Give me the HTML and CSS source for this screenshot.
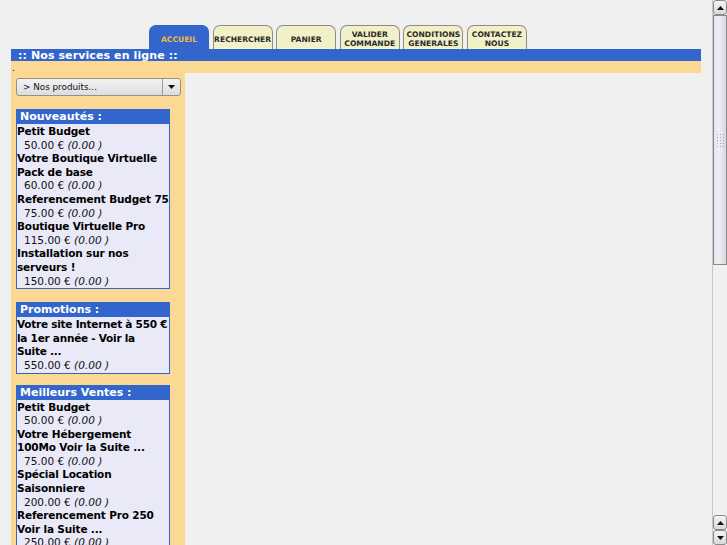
FILE: index.html
```html
<!DOCTYPE html>
<html lang="fr">
<head>
<meta charset="utf-8">
<title>Nos services en ligne</title>
<link rel="stylesheet" href="styles.css">
</head>
<body>
<div class="viewport">
  <div class="page">
    <div class="tabs">
      <div class="tab active">ACCUEIL</div>
      <div class="tab">RECHERCHER</div>
      <div class="tab">PANIER</div>
      <div class="tab">VALIDER<br>COMMANDE</div>
      <div class="tab">CONDITIONS<br>GENERALES</div>
      <div class="tab">CONTACTEZ<br>NOUS</div>
    </div>
    <div class="titlebar">:: Nos services en ligne ::</div>
    <div class="strip">.</div>
    <div class="main">
      <div class="left">
        <div class="select">
          <span class="select-text">&gt; Nos produits...</span>
          <span class="select-btn"><svg width="7" height="4" viewBox="0 0 7 4"><path d="M0 0H7L3.5 4Z" fill="#111"/></svg></span>
        </div>
        <div class="box">
          <div class="box-head">Nouveautés :</div>
          <div class="box-body">
            <div class="name">Petit Budget</div>
            <div class="price">50.00 € <i>(0.00 )</i></div>
            <div class="name">Votre Boutique Virtuelle Pack de base</div>
            <div class="price">60.00 € <i>(0.00 )</i></div>
            <div class="name">Referencement Budget 75</div>
            <div class="price">75.00 € <i>(0.00 )</i></div>
            <div class="name">Boutique Virtuelle Pro</div>
            <div class="price">115.00 € <i>(0.00 )</i></div>
            <div class="name">Installation sur nos serveurs !</div>
            <div class="price">150.00 € <i>(0.00 )</i></div>
          </div>
        </div>
        <div class="box box-promo">
          <div class="box-head">Promotions :</div>
          <div class="box-body">
            <div class="name tight">Votre site Internet à 550&nbsp;€ la 1er année - Voir la Suite&nbsp;...</div>
            <div class="price">550.00 € <i>(0.00 )</i></div>
          </div>
        </div>
        <div class="box">
          <div class="box-head">Meilleurs Ventes :</div>
          <div class="box-body">
            <div class="name">Petit Budget</div>
            <div class="price">50.00 € <i>(0.00 )</i></div>
            <div class="name">Votre Hébergement 100Mo Voir la Suite ...</div>
            <div class="price">75.00 € <i>(0.00 )</i></div>
            <div class="name">Spécial Location Saisonniere</div>
            <div class="price">200.00 € <i>(0.00 )</i></div>
            <div class="name">Referencement Pro 250 Voir la Suite ...</div>
            <div class="price">250.00 € <i>(0.00 )</i></div>
          </div>
        </div>
      </div>
      <div class="content"></div>
    </div>
  </div>
  <div class="scrollbar">
    <div class="sb-btn"><svg width="7" height="4" viewBox="0 0 7 4"><path d="M0 4H7L3.5 0Z" fill="#111"/></svg></div>
    <div class="sb-thumb">
      <div class="grip"></div>
    </div>
    <div class="sb-track"></div>
    <div class="sb-btn"><svg width="7" height="4" viewBox="0 0 7 4"><path d="M0 4H7L3.5 0Z" fill="#111"/></svg></div>
    <div class="sb-btn"><svg width="7" height="4" viewBox="0 0 7 4"><path d="M0 0H7L3.5 4Z" fill="#111"/></svg></div>
  </div>
</div>
</body>
</html>
```

FILE: styles.css
```css
html, body {
  margin: 0;
  padding: 0;
  height: 100%;
  overflow: hidden;
  background: #f0f0f0;
}
body {
  font-family: "DejaVu Sans", Verdana, sans-serif;
  color: #000;
}
.viewport {
  display: flex;
  height: 545px;
  width: 727px;
  overflow: hidden;
}
.page {
  flex: 0 0 712px;
  padding-left: 11px;
  padding-right: 11px;
  box-sizing: border-box;
}
.tabs {
  display: flex;
  gap: 3.6px;
  padding-left: 138px;
  margin-top: 25px;
  height: 24px;
}
.tab {
  width: 60px;
  height: 24px;
  box-sizing: border-box;
  background: #f2f0c6;
  border: 1px solid #8c8c8c;
  border-bottom: none;
  border-radius: 7px 7px 0 0;
  font-size: 7.6px;
  font-weight: bold;
  line-height: 8.6px;
  color: #2a2a2a;
  display: flex;
  align-items: center;
  justify-content: center;
  text-align: center;
  padding-top: 5px;
}
.tab.active {
  background: #3366cc;
  border-color: #3366cc;
  color: #f0b848;
}
.titlebar {
  background: #3366cc;
  color: #fff;
  font-size: 11px;
  font-weight: bold;
  height: 12px;
  line-height: 14px;
  padding-left: 7px;
  letter-spacing: 0.1px;
  overflow: hidden;
}
.strip {
  background: #fbd995;
  height: 12px;
  font-size: 9px;
  line-height: 15px;
  padding-left: 1px;
  overflow: hidden;
}
.main {
  display: flex;
  height: 480px;
}
.left {
  flex: 0 0 174px;
  box-sizing: border-box;
  background: #fbd995;
  padding: 5px 4px 0 5px;
}
.content {
  flex: 1;
  background: #f0f0f0;
}
.select {
  height: 18px;
  box-sizing: border-box;
  border: 1px solid #9a9278;
  border-radius: 3px;
  background: linear-gradient(#f4f4f6, #dcdce2);
  display: flex;
  align-items: center;
  font-size: 8.8px;
  margin-bottom: 13px;
}
.select-text {
  flex: 1;
  padding-left: 6px;
  color: #111;
}
.select-btn {
  width: 17px;
  height: 16px;
  border-left: 1px solid #9a9a9a;
  display: flex;
  align-items: center;
  justify-content: center;
}
.box {
  width: 154px;
  box-sizing: border-box;
  border: 1px solid #3366cc;
  background: #e9e9f8;
  margin-bottom: 13px;
}
.box.box-promo {
  margin-bottom: 11px;
}
.box-head {
  background: #3366cc;
  color: #fff;
  font-size: 11px;
  font-weight: bold;
  height: 14px;
  line-height: 14px;
  padding-left: 3px;
}
.box-body {
  font-size: 10.5px;
  line-height: 13.6px;
  letter-spacing: -0.15px;
  padding-top: 1px;
}
.name {
  font-weight: bold;
}
.name.tight {
  letter-spacing: -0.25px;
  margin-right: -1px;
}
.price {
  padding-left: 7px;
  font-weight: normal;
  color: #111;
  letter-spacing: 0;
}
.price i {
  font-style: oblique;
}
.scrollbar {
  flex: 0 0 15px;
  display: flex;
  flex-direction: column;
  background: #f7f7f7;
  border-left: 1px solid #c8c8c8;
  box-sizing: border-box;
}
.sb-btn {
  height: 15px;
  box-sizing: border-box;
  border: 1px solid #8a8a8a;
  border-radius: 3px;
  background: linear-gradient(#f6f6f8, #d8d8de);
  display: flex;
  align-items: center;
  justify-content: center;
}
.sb-thumb {
  height: 250px;
  box-sizing: border-box;
  border: 1px solid #8a8a8a;
  background: linear-gradient(90deg, #e2e4ee, #eef0f6 40%, #d6d8e2);
  display: flex;
  align-items: center;
  justify-content: center;
}
.grip {
  width: 9px;
  height: 14px;
  background-image: radial-gradient(#a8a8b0 0.8px, transparent 1px);
  background-size: 3px 3px;
}
.sb-track {
  flex: 1;
  background-color: #f8f8f8;
  background-image: radial-gradient(#e8e8e8 0.6px, transparent 0.8px);
  background-size: 2px 2px;
}
```
